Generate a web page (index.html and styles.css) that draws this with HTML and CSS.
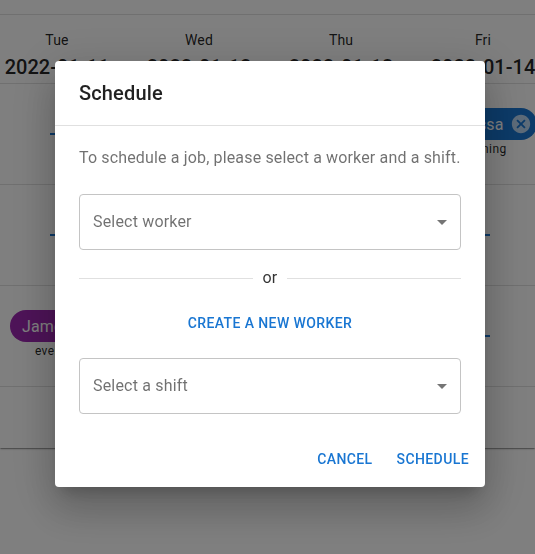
FILE: index.html
```html
<!DOCTYPE html>
<html lang="en">
<head>
<meta charset="utf-8">
<title>Schedule</title>
<link rel="stylesheet" href="styles.css">
</head>
<body>
<main class="calendar">
  <div class="toolbar"></div>
  <div class="row head">
    <div class="day"><span>Tue</span><strong>2022-01-11</strong></div>
    <div class="day"><span>Wed</span><strong>2022-01-12</strong></div>
    <div class="day"><span>Thu</span><strong>2022-01-13</strong></div>
    <div class="day"><span>Fri</span><strong>2022-01-14</strong></div>
  </div>
  <div class="row">
    <div class="cell"><i class="dash"></i></div>
    <div class="cell"><i class="dash"></i></div>
    <div class="cell"><i class="dash"></i></div>
    <div class="cell">
      <div class="chip blue">Vanessa<svg viewBox="0 0 24 24"><path d="M12 2C6.47 2 2 6.47 2 12s4.47 10 10 10 10-4.47 10-10S17.53 2 12 2zm5 13.59L15.59 17 12 13.41 8.41 17 7 15.59 10.59 12 7 8.41 8.41 7 12 10.59 15.59 7 17 8.41 13.41 12 17 15.59z"/></svg></div>
      <small>morning</small>
    </div>
  </div>
  <div class="row">
    <div class="cell"><i class="dash"></i></div>
    <div class="cell"><i class="dash"></i></div>
    <div class="cell"><i class="dash"></i></div>
    <div class="cell"><i class="dash"></i></div>
  </div>
  <div class="row">
    <div class="cell">
      <div class="chip purple">James<svg viewBox="0 0 24 24"><path d="M12 2C6.47 2 2 6.47 2 12s4.47 10 10 10 10-4.47 10-10S17.53 2 12 2zm5 13.59L15.59 17 12 13.41 8.41 17 7 15.59 10.59 12 7 8.41 8.41 7 12 10.59 15.59 7 17 8.41 13.41 12 17 15.59z"/></svg></div>
      <small>evening</small>
    </div>
    <div class="cell"><i class="dash"></i></div>
    <div class="cell"><i class="dash"></i></div>
    <div class="cell"><i class="dash"></i></div>
  </div>
  <div class="footer"></div>
</main>
<div class="backdrop">
  <section class="dialog" role="dialog">
    <h2>Schedule</h2>
    <div class="content">
      <p>To schedule a job, please select a worker and a shift.</p>
      <div class="select"><span>Select worker</span><svg viewBox="0 0 24 24"><path d="M7 10l5 5 5-5z"/></svg></div>
      <div class="divider">or</div>
      <button class="create">Create a new worker</button>
      <div class="select"><span>Select a shift</span><svg viewBox="0 0 24 24"><path d="M7 10l5 5 5-5z"/></svg></div>
    </div>
    <div class="actions"><button>Cancel</button><button>Schedule</button></div>
  </section>
</div>
</body>
</html>
```
FILE: styles.css
```css
* { box-sizing: border-box; }
body {
  margin: 0;
  height: 554px;
  overflow: hidden;
  background: #fff;
  color: rgba(0, 0, 0, .87);
  font-family: Roboto, sans-serif;
  font-size: 16px;
}
.calendar {
  height: 448px;
  box-shadow: 0 2px 1px -1px rgba(0,0,0,.2), 0 1px 1px rgba(0,0,0,.14), 0 1px 3px rgba(0,0,0,.12);
}
.toolbar { height: 15px; border-bottom: 1px solid #e0e0e0; }
.row {
  display: grid;
  grid-template-columns: repeat(4, 142px);
  width: 568px;
  height: 101px;
  margin-left: -14px;
  border-bottom: 1px solid #e0e0e0;
}
.head { height: 69px; }
.day {
  display: flex;
  flex-direction: column;
  align-items: center;
  padding-top: 15px;
  font-size: 14px;
  line-height: 20px;
  letter-spacing: .15px;
}
.day strong {
  font-size: 20px;
  font-weight: 500;
  line-height: 34px;
  letter-spacing: 0;
  white-space: nowrap;
}
.cell {
  display: flex;
  flex-direction: column;
  align-items: center;
  justify-content: center;
}
.dash { width: 14px; height: 2px; background: #1976d2; }
.chip {
  display: flex;
  align-items: center;
  height: 32px;
  padding: 0 5px 0 12px;
  gap: 6px;
  border-radius: 16px;
  color: #fff;
  letter-spacing: .15px;
}
.blue { background: #1976d2; }
.purple { background: #9c27b0; }
.chip svg { width: 22px; height: 22px; fill: rgba(255, 255, 255, .7); }
.cell small {
  padding-bottom: 2px;
  font-size: 12px;
  line-height: 18px;
  letter-spacing: .4px;
}
.footer { height: 61px; }
.backdrop {
  position: fixed;
  inset: 0;
  padding: 61px 50px 67px 55px;
  background: rgba(0, 0, 0, .5);
}
.dialog {
  height: 426px;
  border-radius: 4px;
  background: #fff;
  box-shadow: 0 11px 15px -7px rgba(0,0,0,.2), 0 24px 38px 3px rgba(0,0,0,.14), 0 9px 46px 8px rgba(0,0,0,.12);
}
h2 {
  margin: 0;
  padding: 16px 24px;
  font-size: 20px;
  font-weight: 500;
  line-height: 32px;
  letter-spacing: .15px;
}
.content {
  display: flex;
  flex-direction: column;
  padding: 20px 24px;
  border-top: 1px solid #e0e0e0;
}
.content p {
  margin: 0 0 24px;
  color: rgba(0, 0, 0, .56);
  line-height: 24px;
  letter-spacing: .15px;
  white-space: nowrap;
}
.select {
  display: flex;
  align-items: center;
  justify-content: space-between;
  height: 56px;
  padding: 0 6px 0 13px;
  border: 1px solid #c4c4c4;
  border-radius: 4px;
  color: rgba(0, 0, 0, .56);
  letter-spacing: .18px;
}
.select span { padding-bottom: 2px; }
.select svg { width: 24px; height: 24px; fill: rgba(0, 0, 0, .54); }
.divider {
  display: flex;
  align-items: center;
  gap: 10px;
  margin: 16px 0 15px;
  color: rgba(0, 0, 0, .8);
  line-height: 24px;
  letter-spacing: .15px;
}
.divider::before, .divider::after { content: ""; flex: 1; border-top: 1px solid #e0e0e0; }
button {
  padding: 6px 8px;
  border: 0;
  background: none;
  color: #1976d2;
  font: 500 14px/24.5px Roboto, sans-serif;
  letter-spacing: .4px;
  text-transform: uppercase;
}
.create { margin-bottom: 16.5px; }
.actions {
  display: flex;
  justify-content: flex-end;
  gap: 8px;
  padding: 7px 8px 9px;
}
```
